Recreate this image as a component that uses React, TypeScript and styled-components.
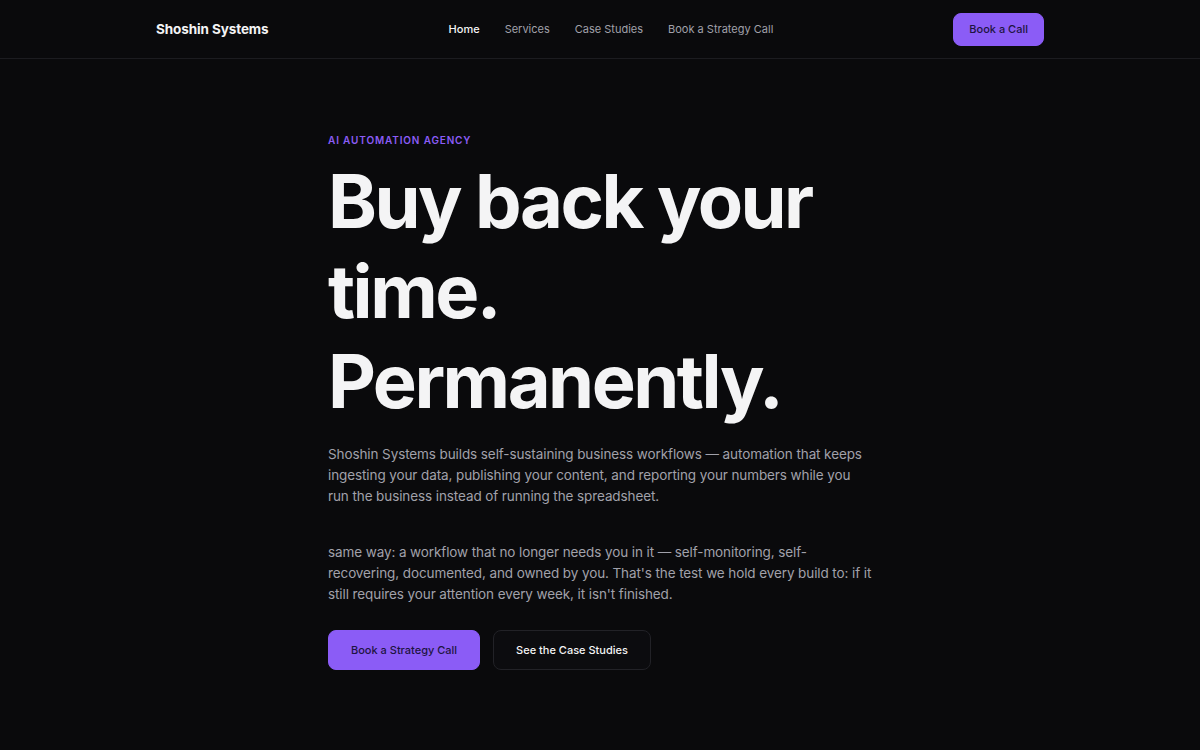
import React from 'react';
import styled, { createGlobalStyle } from 'styled-components';

const GlobalStyle = createGlobalStyle`
  * { box-sizing: border-box; }
  html, body {
    margin: 0;
    padding: 0;
    background: #0a0a0c;
    color: #f4f4f5;
    font-family: Inter, "Liberation Sans", sans-serif;
  }
`;

const Page = styled.div`
  min-height: 750px;
  background: #0a0a0c;
`;

const Header = styled.header`
  height: 59px;
  border-bottom: 1px solid #1c1c20;
`;

const HeaderInner = styled.div`
  max-width: 888px;
  height: 100%;
  margin: 0 auto;
  display: flex;
  align-items: center;
  justify-content: space-between;
`;

const Brand = styled.div`
  font-weight: 700;
  font-size: 13.5px;
  letter-spacing: -0.1px;
  color: #f4f4f5;
`;

const Nav = styled.nav`
  display: flex;
  gap: 25px;
`;

const NavLink = styled.a<{ $active?: boolean }>`
  font-size: 11px;
  color: ${(p) => (p.$active ? '#f4f4f5' : '#a1a1aa')};
  font-weight: ${(p) => (p.$active ? 500 : 400)};
  text-decoration: none;
  cursor: pointer;
`;

const Button = styled.a<{ $variant?: 'primary' | 'ghost'; $size?: 'sm' | 'md' }>`
  display: inline-flex;
  align-items: center;
  justify-content: center;
  height: ${(p) => (p.$size === 'sm' ? '33px' : '40px')};
  padding: 0 ${(p) => (p.$size === 'sm' ? '15px' : '22px')};
  border-radius: 8px;
  font-size: 11px;
  font-weight: 500;
  text-decoration: none;
  cursor: pointer;
  background: ${(p) => (p.$variant === 'ghost' ? '#0c0c0f' : '#8b5cf6')};
  color: ${(p) => (p.$variant === 'ghost' ? '#f4f4f5' : '#1e1442')};
  border: 1px solid ${(p) => (p.$variant === 'ghost' ? '#222227' : '#8b5cf6')};
`;

const Hero = styled.main`
  max-width: 544px;
  margin: 0 auto;
  padding-top: 74px;
`;

const Eyebrow = styled.div`
  font-size: 10px;
  font-weight: 600;
  letter-spacing: 0.85px;
  color: #8b5cf6;
  text-transform: uppercase;
  line-height: 14px;
`;

const Title = styled.h1`
  margin: 9px 0 0;
  font-size: 74px;
  font-weight: 700;
  line-height: 90px;
  letter-spacing: -2.5px;
  color: #f4f4f5;
`;

const Lead = styled.p<{ $gap?: number }>`
  margin: ${(p) => p.$gap ?? 0}px 0 0;
  font-size: 13.5px;
  line-height: 21px;
  letter-spacing: -0.1px;
  color: #a1a1aa;
`;

const ButtonRow = styled.div`
  display: flex;
  gap: 13px;
  margin-top: 25px;
`;

export default function App() {
  return (
    <Page>
      <GlobalStyle />
      <Header>
        <HeaderInner>
          <Brand>Shoshin Systems</Brand>
          <Nav>
            <NavLink $active>Home</NavLink>
            <NavLink>Services</NavLink>
            <NavLink>Case Studies</NavLink>
            <NavLink>Book a Strategy Call</NavLink>
          </Nav>
          <Button $size="sm">Book a Call</Button>
        </HeaderInner>
      </Header>
      <Hero>
        <Eyebrow>AI Automation Agency</Eyebrow>
        <Title>
          Buy back your
          <br />
          time.
          <br />
          Permanently.
        </Title>
        <Lead $gap={18}>
          Shoshin Systems builds self-sustaining business workflows — automation that keeps
          ingesting your data, publishing your content, and reporting your numbers while you
          run the business instead of running the spreadsheet.
        </Lead>
        <Lead $gap={35}>
          same way: a workflow that no longer needs you in it — self-monitoring, self-recovering,
          documented, and owned by you. That's the test we hold every build to: if it still
          requires your attention every week, it isn't finished.
        </Lead>
        <ButtonRow>
          <Button>Book a Strategy Call</Button>
          <Button $variant="ghost">See the Case Studies</Button>
        </ButtonRow>
      </Hero>
    </Page>
  );
}
